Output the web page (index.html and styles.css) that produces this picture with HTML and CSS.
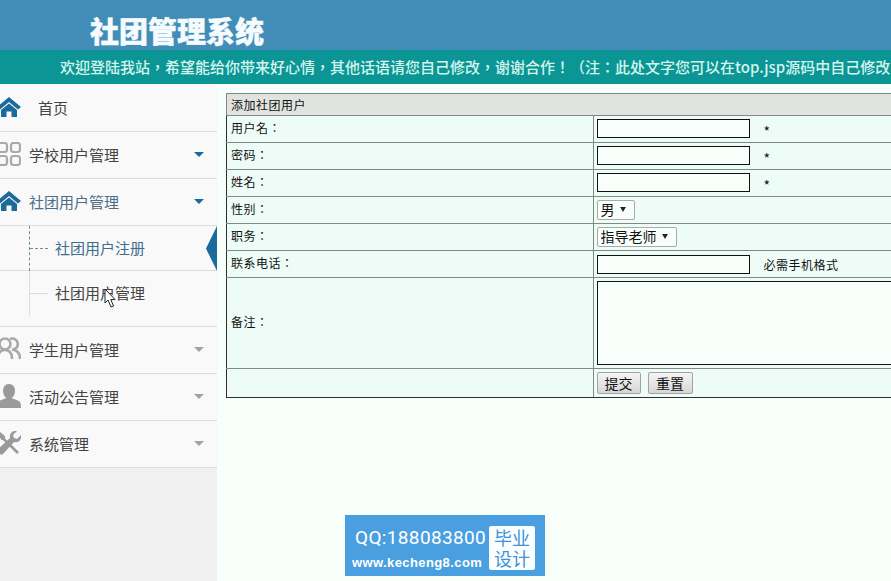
FILE: index.html
```html
<!DOCTYPE html>
<html lang="zh-CN">
<head>
<meta charset="utf-8">
<title>社团管理系统</title>
<link rel="stylesheet" href="styles.css">
</head>
<body>
<header class="top">
  <h1 class="title">社团管理系统</h1>
</header>
<div class="notice" lang="zh-Hant">欢迎登陆我站，希望能给你带来好心情，其他话语请您自己修改，谢谢合作！（注：此处文字您可以在top.jsp源码中自己修改</div>
<div class="layout">
  <nav class="side">
    <a class="item item-home">
      <svg class="icon" viewBox="0 0 24 20"><path class="ic-blue" d="M0 10 L12 0 L24 10 L21 12.5 L12 5 L3 12.5Z M4 13 L12 6.500 L20 13 V20 H14.500 V14.500 H9.500 V20 H4Z"/></svg>
      <span class="home-label">首页</span>
    </a>
    <a class="item">
      <svg class="icon" viewBox="0 0 24 24"><g class="ic-line"><rect x="1" y="1" width="9" height="9" rx="2.500"/><rect x="14" y="1" width="9" height="9" rx="2.500"/><rect x="1" y="14" width="9" height="9" rx="2.500"/><rect x="14" y="14" width="9" height="9" rx="2.500"/></g></svg>
      <span class="label">学校用户管理</span><i class="caret caret-blue"></i>
    </a>
    <a class="item item-open">
      <svg class="icon" viewBox="0 0 24 20"><path class="ic-blue" d="M0 10 L12 0 L24 10 L21 12.5 L12 5 L3 12.5Z M4 13 L12 6.500 L20 13 V20 H14.500 V14.500 H9.500 V20 H4Z"/></svg>
      <span class="label">社团用户管理</span><i class="caret caret-blue"></i>
    </a>
    <a class="sub sub-active"><span class="tree"></span><span>社团用户注册</span>
      <svg class="pointer" viewBox="0 0 11 45"><path d="M11 0 L0 22.500 L11 45Z"/></svg>
    </a>
    <a class="sub sub-last"><span class="tree"></span><span>社团用户管理</span></a>
    <a class="item">
      <svg class="icon" viewBox="0 0 24 24"><g class="ic-line ic-thick"><circle cx="8" cy="7" r="5.500"/><path d="M1 22 C1 15 4 13 8 13 C12 13 15 15 15 22"/><path d="M13 2 A5.500 5.500 0 1 1 15 12.500 C20 13 23 16 23 22"/></g></svg>
      <span class="label">学生用户管理</span><i class="caret"></i>
    </a>
    <a class="item">
      <svg class="icon" viewBox="0 0 24 24"><path class="ic-grey" d="M12 0 C16 0 18 3 18 7 C18 10 16.500 13 14.500 14 L22 17 C23.500 18 24 20 24 24 H0 C0 20 .5 18 2 17 L9.500 14 C7.500 13 6 10 6 7 C6 3 8 0 12 0Z"/></svg>
      <span class="label">活动公告管理</span><i class="caret"></i>
    </a>
    <a class="item">
      <svg class="icon" viewBox="0 0 24 24"><path class="ic-grey" d="M1 3 L3 1 L8 5 L8 7.500 L22 21 L20 23 L6.500 9.500 L4.500 9Z"/><path class="ic-grey" d="M24 4 L20 8 L17 7 L16 4 L20 0 C16 -1 12 2 13 7 L1 18 C-1 21 3 25 6 23 L17 11 C21 12 25 9 24 4Z"/></svg>
      <span class="label">系统管理</span><i class="caret"></i>
    </a>
  </nav>
  <main class="content">
    <form>
      <table class="form-table" lang="zh-Hant">
        <tr class="row-head"><td colspan="2">添加社团用户</td></tr>
        <tr><td class="cell-l">用户名：</td><td class="cell-r"><input class="field" type="text"><span class="hint hint-star">*</span></td></tr>
        <tr><td class="cell-l">密码：</td><td class="cell-r"><input class="field" type="password"><span class="hint hint-star">*</span></td></tr>
        <tr><td class="cell-l">姓名：</td><td class="cell-r"><input class="field" type="text"><span class="hint hint-star">*</span></td></tr>
        <tr><td class="cell-l">性别：</td><td class="cell-r"><select class="pick pick-sex"><option>男</option><option>女</option></select></td></tr>
        <tr><td class="cell-l">职务：</td><td class="cell-r"><select class="pick pick-job"><option>指导老师</option></select></td></tr>
        <tr><td class="cell-l">联系电话：</td><td class="cell-r"><input class="field" type="text"><span class="hint">必需手机格式</span></td></tr>
        <tr class="row-area"><td class="cell-l">备注：</td><td class="cell-r"><textarea class="area"></textarea></td></tr>
        <tr class="row-btn"><td class="cell-l"></td><td class="cell-r"><button class="btn" type="button">提交</button><button class="btn btn-reset" type="reset">重置</button></td></tr>
      </table>
    </form>
  </main>
</div>
<svg class="cursor" viewBox="0 0 12 20"><path d="M1 1 L1 15 L4 12 L7 19 L9.500 18 L6.800 11.500 L11 11.500Z"/></svg>
<aside class="badge">
  <div class="badge-text">
    <div class="badge-qq">QQ:188083800</div>
    <div class="badge-url">www.kecheng8.com</div>
  </div>
  <div class="badge-box">毕业<br>设计</div>
</aside>
</body>
</html>
```
FILE: styles.css
```css
* { box-sizing: border-box; }
html, body { margin: 0; padding: 0; height: 581px; overflow: hidden; }
body { background: #f8fffb; font-family: "Noto Sans CJK SC", "Liberation Sans", sans-serif; color: #222; position: relative; }

.top { height: 50px; background: #418db8; padding-left: 90px; }
.title { margin: 0; font-size: 29px; line-height: 60px; font-weight: 900; color: #f6fbfd; -webkit-text-stroke: .4px #f6fbfd; white-space: nowrap; }
.notice { height: 34px; background: #0c9595; color: #d4f5ee; font-family: "Noto Sans CJK TC", sans-serif; font-size: 15px; font-weight: 500; line-height: 33px; padding-left: 60px; white-space: nowrap; overflow: hidden; }

.layout { display: flex; height: 497px; }
.side { width: 217px; flex: none; background: #f0f0f0; overflow: hidden; }
.item { display: flex; align-items: center; height: 47px; padding-bottom: 2px; background: #f9f9f9; border-bottom: 1px solid #dcdcdc; font-size: 15px; color: #444; position: relative; }
.item-home { height: 48px; padding-bottom: 1px; }
.item-open .label { color: #4c6d85; }
.icon { width: 24px; height: 24px; margin-left: -3px; flex: none; }
.ic-blue { fill: #1b6a9c; }
.ic-grey { fill: #9a9a9a; }
.ic-line { fill: none; stroke: #a9a9a9; stroke-width: 2.2; }
.ic-thick { stroke-width: 2.6; }
.home-label { margin-left: 17px; }
.label { margin-left: 8px; flex: 1; }
.caret { width: 0; height: 0; border: 5px solid transparent; border-top: 5px solid #a3a3a3; border-bottom: 0; margin-right: 13px; }
.caret-blue { border-top-color: #1b6a9c; }

.sub { display: flex; align-items: center; background: #f9f9f9; font-size: 15px; color: #444; padding-left: 55px; position: relative; }
.sub-active { height: 45px; padding-bottom: 2px; color: #3f6d8c; border-bottom: 1px solid #dcdcdc; }
.sub-last { height: 56px; padding-bottom: 13px; border-bottom: 1px solid #dcdcdc; }
.tree { position: absolute; left: 29px; top: 0; width: 19px; border-left: 1px dashed #6e8ea5; }
.sub-active .tree { height: 45px; }
.sub-last .tree { height: 45px; border-left: 1px solid #dcdcdc; }
.tree::after { content: ""; position: absolute; left: 0; top: 22px; width: 18px; border-top: 1px dashed #6e8ea5; }
.sub-last .tree::after { border-top: 1px solid #dcdcdc; }
.pointer { position: absolute; right: 0; top: 0; width: 11px; height: 45px; fill: #1b6a9c; }

.content { flex: 1; min-width: 0; padding: 9px 0 0 9px; overflow: hidden; }
.form-table { border-collapse: collapse; table-layout: fixed; width: 734px; font-family: "Noto Sans CJK TC", sans-serif; font-size: 12px; letter-spacing: .5px; color: #111; background: #eefcf8; border: 1px solid #2c302e; }
.form-table td { border: 1px solid #7f8a85; padding: 0 3px; height: 27px; white-space: nowrap; }
.form-table .cell-l { width: 367px; padding: 0 3px 3px 4px; border-left-color: #2c302e; }
.form-table .cell-r { padding-bottom: 1px; }
.row-head td { height: 22px; padding: 0 4px 1px; background: #e0e3e0; }
.row-area td { height: 91px; }
.row-btn td { height: 29px; border-bottom-color: #2c302e; }

.field { width: 153px; height: 19px; border: 1px solid #111; background: #f8fffb; padding: 0 2px; vertical-align: middle; }
.hint { margin-left: 14px; vertical-align: middle; }
.hint-star { position: relative; top: 2px; font-size: 14px; }
.pick { appearance: none; -webkit-appearance: none; height: 20px; border: 1px solid #aaa; border-radius: 2px; background-color: #f8fffb; font: 14px/16px "Noto Sans CJK SC", sans-serif; color: #111; padding: 0 0 2px 3px; vertical-align: middle; background-repeat: no-repeat; background-position: right 8px center; background-size: 6px 5px; background-image: url("data:image/svg+xml,%3Csvg xmlns='http://www.w3.org/2000/svg' viewBox='0 0 7 6'%3E%3Cpath d='M0 0H7L3.500 6Z' fill='%23222'/%3E%3C/svg%3E"); }
.pick-sex { width: 38px; }
.pick-job { width: 80px; }
.area { display: block; width: 360px; height: 84px; border: 1px solid #111; background: #f8fffb; padding: 0; resize: none; margin: 0; }
.btn { width: 44px; height: 22px; border: 1px solid #a3a3a3; border-radius: 2px; background: linear-gradient(#f4f4f4, #d6d6d6); font: 14px/18px "Noto Sans CJK SC", sans-serif; color: #111; padding: 0; vertical-align: middle; }
.btn-reset { width: 45px; margin-left: 7px; }

.cursor { position: absolute; left: 104px; top: 288px; width: 12px; height: 20px; fill: #fff; stroke: #222; stroke-width: 1; }
.badge { position: absolute; left: 345px; top: 515px; width: 200px; height: 61px; background: #4a9fe0; display: flex; color: #fff; padding: 11px 10px 6px 7px; justify-content: space-between; }
.badge-text { display: flex; flex-direction: column; }
.badge-qq { font: 19px/24px Roboto, "Liberation Sans", sans-serif; letter-spacing: .35px; padding-left: 3px; white-space: nowrap; }
.badge-url { font: 700 13px/18px "Liberation Sans", sans-serif; letter-spacing: .4px; margin-top: 4px; white-space: nowrap; }
.badge-box { width: 46px; height: 44px; background: #fbfeff; color: #3f93d6; border-radius: 2px; font-size: 18px; line-height: 21px; text-align: center; padding-top: 1px; }
```
